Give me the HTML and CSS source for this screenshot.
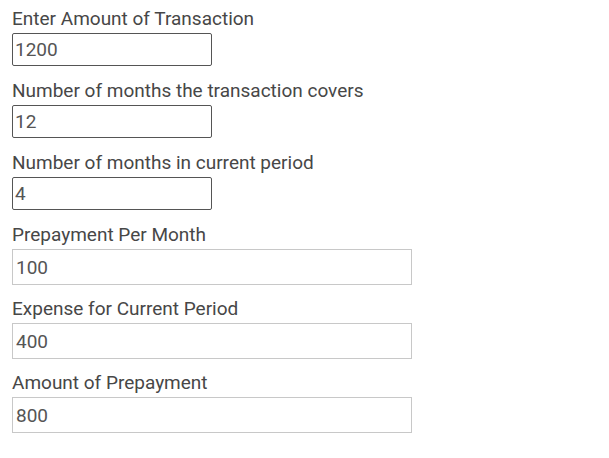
FILE: index.html
```html
<!DOCTYPE html>
<html>
<head>
<meta charset="utf-8">
<link rel="stylesheet" href="styles.css">
</head>
<body>
<form class="calc">
  <div class="field">
    <label class="label">Enter Amount of Transaction</label>
    <input class="input input-small" type="text" value="1200">
  </div>
  <div class="field">
    <label class="label">Number of months the transaction covers</label>
    <input class="input input-small" type="text" value="12">
  </div>
  <div class="field">
    <label class="label">Number of months in current period</label>
    <input class="input input-small" type="text" value="4">
  </div>
  <div class="field field-wide">
    <label class="label">Prepayment Per Month</label>
    <input class="input input-wide" type="text" value="100">
  </div>
  <div class="field field-wide">
    <label class="label">Expense for Current Period</label>
    <input class="input input-wide" type="text" value="400">
  </div>
  <div class="field field-wide">
    <label class="label">Amount of Prepayment</label>
    <input class="input input-wide" type="text" value="800">
  </div>
</form>
</body>
</html>
```

FILE: styles.css
```css
html, body {
  margin: 0;
  padding: 0;
  background: #ffffff;
}
body {
  font-family: Roboto, "Liberation Sans", Arial, sans-serif;
  font-size: 19px;
  color: #444444;
}
.calc {
  display: flex;
  flex-direction: column;
  gap: 13px;
  padding: 7px 0 0 12px;
}
.field {
  display: flex;
  flex-direction: column;
  align-items: flex-start;
  gap: 2px;
}
.label {
  display: block;
  line-height: 24px;
  color: #474747;
}
.field-wide + .field-wide .label {
  margin-top: -1px;
}
.input {
  box-sizing: border-box;
  margin: 0;
  font-family: Roboto, "Liberation Sans", Arial, sans-serif;
  font-size: 19px;
  color: #555555;
  background: #ffffff;
  outline: none;
}
.input-small {
  width: 200px;
  height: 33px;
  padding: 1px 2px;
  border: 1px solid #555555;
  border-radius: 2px;
}
.input-wide {
  width: 400px;
  height: 36px;
  padding: 1px 3px;
  border: 1px solid #c8c8c8;
  border-radius: 0;
}
```
